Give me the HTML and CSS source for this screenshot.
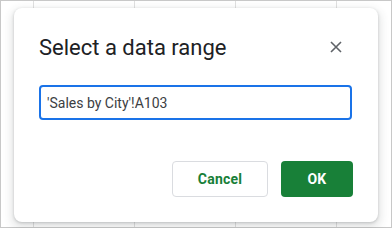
FILE: index.html
```html
<!DOCTYPE html>
<html>
<head>
<meta charset="utf-8">
<link rel="stylesheet" href="styles.css">
</head>
<body>
<div class="sheet">
  <div class="dialog">
    <div class="header">
      <h1 class="title">Select a data range</h1>
      <button class="close" aria-label="Close">
        <svg width="12" height="12" viewBox="0 0 12 12"><path d="M1 1L11 11M11 1L1 11" stroke="#5f6368" stroke-width="1.6" fill="none"/></svg>
      </button>
    </div>
    <div class="field">'Sales by City'!A103</div>
    <div class="actions">
      <button class="btn btn-cancel">Cancel</button>
      <button class="btn btn-ok">OK</button>
    </div>
  </div>
</div>
</body>
</html>
```
FILE: styles.css
```css
html, body {
  margin: 0;
  padding: 0;
  width: 392px;
  height: 228px;
  overflow: hidden;
}
body {
  font-family: Roboto, "Liberation Sans", sans-serif;
}
.sheet {
  box-sizing: border-box;
  width: 392px;
  height: 228px;
  border: 1px solid #c8c8c8;
  background-color: #fff;
  background-image:
    linear-gradient(to right, transparent 32px, #e0e0e0 32px, #e0e0e0 33px, transparent 33px),
    linear-gradient(to bottom, transparent 21px, #e0e0e0 21px);
  background-size: 101px 100%, 100% 21px;
  background-position: 0 0, 0 1px;
  padding: 7px 13px 5px 13px;
  display: flex;
}
.dialog {
  flex: 1;
  background: #fff;
  border-radius: 8px;
  box-shadow: 0 1px 3px rgba(60,64,67,.25), 0 4px 8px 3px rgba(60,64,67,.12);
  padding: 24px 25px 0 25px;
  display: flex;
  flex-direction: column;
}
.header {
  display: flex;
  align-items: center;
  justify-content: space-between;
  height: 30px;
}
.title {
  margin: 0;
  font-size: 22px;
  font-weight: 400;
  color: #202124;
  letter-spacing: 0;
}
.close {
  border: 0;
  background: none;
  padding: 0;
  width: 12px;
  height: 12px;
  margin-right: 11px;
  display: flex;
}
.field {
  margin-top: 23px;
  margin-right: 1px;
  height: 35px;
  box-sizing: border-box;
  border: 2px solid #1a73e8;
  border-radius: 4px;
  padding: 0 6px;
  display: flex;
  align-items: center;
  font-size: 14px;
  color: #3c4043;
}
.actions {
  margin-top: 41px;
  display: flex;
  justify-content: flex-end;
  gap: 13px;
  margin-right: 0;
}
.btn {
  height: 36px;
  border-radius: 4px;
  font-family: Roboto, "Liberation Sans", sans-serif;
  font-size: 14px;
  font-weight: 700;
  letter-spacing: 0.2px;
}
.btn-cancel {
  width: 96px;
  background: #fff;
  border: 1px solid #dadce0;
  color: #188038;
}
.btn-ok {
  width: 72px;
  background: #188038;
  border: 0;
  color: #fff;
}
```
